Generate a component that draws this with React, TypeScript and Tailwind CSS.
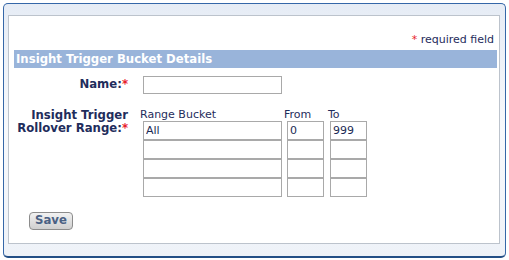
import React from "react";

const font = "font-['DejaVu_Sans','Verdana',sans-serif]";

const Star = () => <span className="text-[#e8222a]">*</span>;

const Cell = ({ w, value }: { w: string; value?: string }) => (
  <input
    readOnly
    defaultValue={value}
    className={`block ${w} h-[19px] border border-[#a9a9a9] bg-white px-[2px] text-[11px] leading-none text-[#1b2a55] outline-none ${font}`}
  />
);

const rows = [
  { bucket: "All", from: "0", to: "999" },
  { bucket: "", from: "", to: "" },
  { bucket: "", from: "", to: "" },
  { bucket: "", from: "", to: "" },
];

const App = () => {
  return (
    <div className={`w-[509px] h-[260px] bg-white p-[3px] ${font}`}>
      <div className="w-[503px] h-[255px] rounded-[5px] border border-[#3567a8] border-b-[#234f86] border-b-2 bg-gradient-to-b from-[#e6ecf5] via-[#f7f9fc] to-[#eef2f8] pt-[11px] pl-[4px] pr-[5px] pb-[12px]">
        <div className="h-full border border-[#bcc3cc] bg-white pl-[5px] pr-[2px] pt-[17px]">
          <div className="flex justify-end pr-[3px] text-[11px] leading-[14px] text-[#1f2d5c]">
            <span>
              <Star /> required field
            </span>
          </div>
          <div className="mt-[3px] h-[18px] bg-[#99b4da] pl-[2px] text-[11.7px] font-bold leading-[18px] text-white">
            Insight Trigger Bucket Details
          </div>

          <div className="mt-[8px] flex items-center">
            <div className="w-[114px] text-right text-[11.7px] font-bold text-[#1f2d5c]">
              Name:<Star />
            </div>
            <div className="ml-[15px]">
              <input
                readOnly
                className="block w-[139px] h-[18px] border border-[#a9a9a9] bg-white outline-none"
              />
            </div>
          </div>

          <div className="mt-[14px] flex">
            <div className="w-[114px] pt-[1px] text-right text-[11.7px] font-bold leading-[13px] text-[#1f2d5c]">
              Insight Trigger
              <br />
              Rollover Range:<Star />
            </div>
            <div className="ml-[12px]">
              <div className="flex h-[13px] text-[11px] leading-[13px] text-[#1f2d5c]">
                <span className="w-[144px]">Range Bucket</span>
                <span className="w-[44px]">From</span>
                <span>To</span>
              </div>
              <div className="ml-[3px] flex flex-col">
                {rows.map((r, i) => (
                  <div key={i} className="flex">
                    <Cell w="w-[139px]" value={r.bucket} />
                    <div className="ml-[5px]">
                      <Cell w="w-[37px]" value={r.from} />
                    </div>
                    <div className="ml-[6px]">
                      <Cell w="w-[37px]" value={r.to} />
                    </div>
                  </div>
                ))}
              </div>
            </div>
          </div>

          <div className="mt-[15px] pl-[15px]">
            <button className="block h-[18px] w-[44px] rounded-[4px] border border-[#8c8c8c] bg-gradient-to-b from-[#f2f2f2] to-[#cfcfcf] text-[11.7px] font-bold leading-none text-[#4a6184]">
              Save
            </button>
          </div>
        </div>
      </div>
    </div>
  );
};

export default App;
